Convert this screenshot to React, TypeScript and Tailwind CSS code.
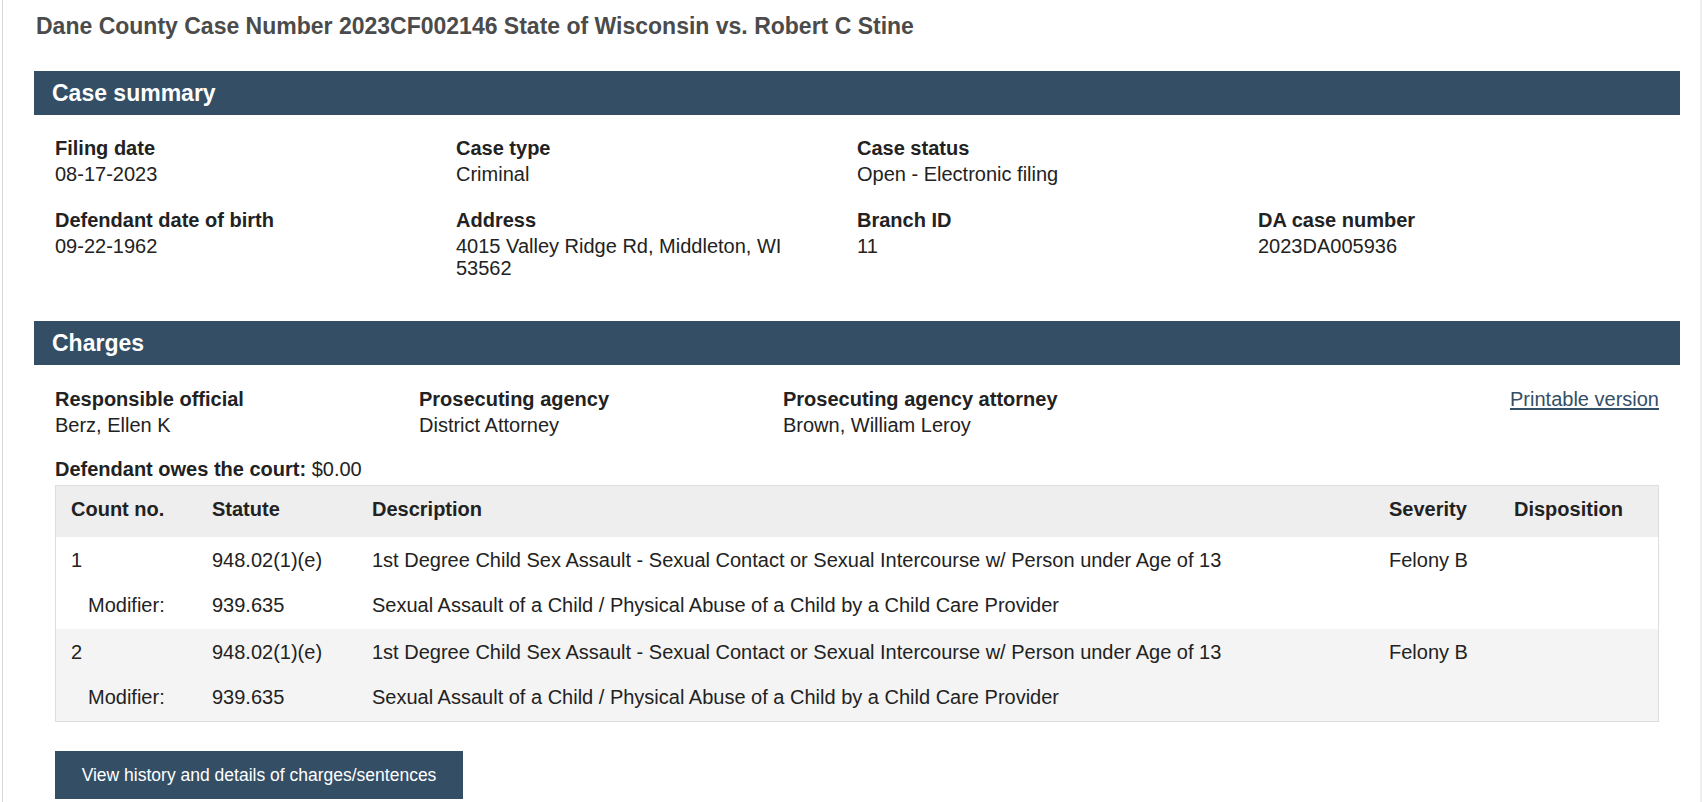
import React from "react";

type Field = { label: string; value: string };

const summaryRow1: Field[] = [
  { label: "Filing date", value: "08-17-2023" },
  { label: "Case type", value: "Criminal" },
  { label: "Case status", value: "Open - Electronic filing" },
];

const summaryRow2: Field[] = [
  { label: "Defendant date of birth", value: "09-22-1962" },
  { label: "Address", value: "4015 Valley Ridge Rd, Middleton, WI 53562" },
  { label: "Branch ID", value: "11" },
  { label: "DA case number", value: "2023DA005936" },
];

const chargeFields: Field[] = [
  { label: "Responsible official", value: "Berz, Ellen K" },
  { label: "Prosecuting agency", value: "District Attorney" },
  { label: "Prosecuting agency attorney", value: "Brown, William Leroy" },
];

const charges = [
  {
    count: "1",
    statute: "948.02(1)(e)",
    description:
      "1st Degree Child Sex Assault - Sexual Contact or Sexual Intercourse w/ Person under Age of 13",
    severity: "Felony B",
    modStatute: "939.635",
    modDescription:
      "Sexual Assault of a Child / Physical Abuse of a Child by a Child Care Provider",
  },
  {
    count: "2",
    statute: "948.02(1)(e)",
    description:
      "1st Degree Child Sex Assault - Sexual Contact or Sexual Intercourse w/ Person under Age of 13",
    severity: "Felony B",
    modStatute: "939.635",
    modDescription:
      "Sexual Assault of a Child / Physical Abuse of a Child by a Child Care Provider",
  },
];

function FieldBlock({ f }: { f: Field }) {
  return (
    <div className="pr-[20px]">
      <div className="text-[20px] leading-[23px] font-bold text-[#222]">{f.label}</div>
      <div className="mt-[3px] text-[20px] leading-[22px] text-[#222]">{f.value}</div>
    </div>
  );
}

function Bar({ title }: { title: string }) {
  return (
    <div className="h-[44px] bg-[#344e65] flex items-center pl-[18px] text-white text-[23px] font-bold">
      {title}
    </div>
  );
}

export default function App() {
  return (
    <div className="min-h-screen bg-white font-['Liberation_Sans',Arial,sans-serif] text-[#222]">
      <div className="ml-[2px] w-[1700px] border-l border-[#d8d8d8] border-r-2 border-r-[#efefef] pl-[31px] pr-[20px] pt-[13px] pb-[40px]">
        <h1 className="pl-[2px] text-[23px] leading-[26px] font-bold text-[#4b4b4b]">
          Dane County Case Number 2023CF002146 State of Wisconsin vs. Robert C Stine
        </h1>

        <section className="mt-[32px]">
          <Bar title="Case summary" />
          <div className="px-[21px] pt-[22px] grid grid-cols-4 gap-y-[24px]">
            {summaryRow1.map((f) => (
              <FieldBlock key={f.label} f={f} />
            ))}
            <div />
            {summaryRow2.map((f) => (
              <FieldBlock key={f.label} f={f} />
            ))}
          </div>
        </section>

        <section className="mt-[42px]">
          <Bar title="Charges" />
          <div className="px-[21px] pt-[23px]">
            <div className="grid grid-cols-[364px_364px_364px_1fr]">
              {chargeFields.map((f) => (
                <FieldBlock key={f.label} f={f} />
              ))}
              <a
                href="#"
                className="justify-self-end text-[20px] leading-[23px] text-[#344e65] underline underline-offset-2"
              >
                Printable version
              </a>
            </div>

            <div className="mt-[22px] text-[20px] leading-[23px]">
              <span className="font-bold">Defendant owes the court:</span> $0.00
            </div>

            <div className="mt-[4px] border border-[#dddddd]">
              <table className="w-full table-fixed border-collapse text-[20px] leading-[23px] text-[#222]">
                <colgroup>
                  <col className="w-[141px]" />
                  <col className="w-[160px]" />
                  <col className="w-[1017px]" />
                  <col className="w-[125px]" />
                  <col />
                </colgroup>
                <thead>
                  <tr className="bg-[#eeeeee]">
                    <th className="pl-[15px] pt-[12px] pb-[16px] text-left font-bold">Count no.</th>
                    <th className="pl-[15px] pt-[12px] pb-[16px] text-left font-bold">Statute</th>
                    <th className="pl-[15px] pt-[12px] pb-[16px] text-left font-bold">Description</th>
                    <th className="pl-[15px] pt-[12px] pb-[16px] text-left font-bold">Severity</th>
                    <th className="pl-[15px] pt-[12px] pb-[16px] text-left font-bold">Disposition</th>
                  </tr>
                </thead>
                <tbody>
                  {charges.map((c, i) => (
                    <React.Fragment key={c.count}>
                      <tr className={i % 2 === 1 ? "bg-[#f4f4f4]" : "bg-white"}>
                        <td className="pl-[15px] pt-[12px] pb-[11px]">{c.count}</td>
                        <td className="pl-[15px] pt-[12px] pb-[11px]">{c.statute}</td>
                        <td className="pl-[15px] pt-[12px] pb-[11px]">{c.description}</td>
                        <td className="pl-[15px] pt-[12px] pb-[11px]">{c.severity}</td>
                        <td className="pl-[15px] pt-[12px] pb-[11px]"></td>
                      </tr>
                      <tr className={i % 2 === 1 ? "bg-[#f4f4f4]" : "bg-white"}>
                        <td className="pl-[32px] pt-[11px] pb-[12px]">Modifier:</td>
                        <td className="pl-[15px] pt-[11px] pb-[12px]">{c.modStatute}</td>
                        <td className="pl-[15px] pt-[11px] pb-[12px]">{c.modDescription}</td>
                        <td className="pl-[15px] pt-[11px] pb-[12px]"></td>
                        <td className="pl-[15px] pt-[11px] pb-[12px]"></td>
                      </tr>
                    </React.Fragment>
                  ))}
                </tbody>
              </table>
            </div>

            <button
              type="button"
              className="mt-[29px] h-[48px] w-[408px] bg-[#344e65] text-white text-[17.5px] leading-[20px] flex items-center justify-center"
            >
              View history and details of charges/sentences
            </button>
          </div>
        </section>
      </div>
    </div>
  );
}
